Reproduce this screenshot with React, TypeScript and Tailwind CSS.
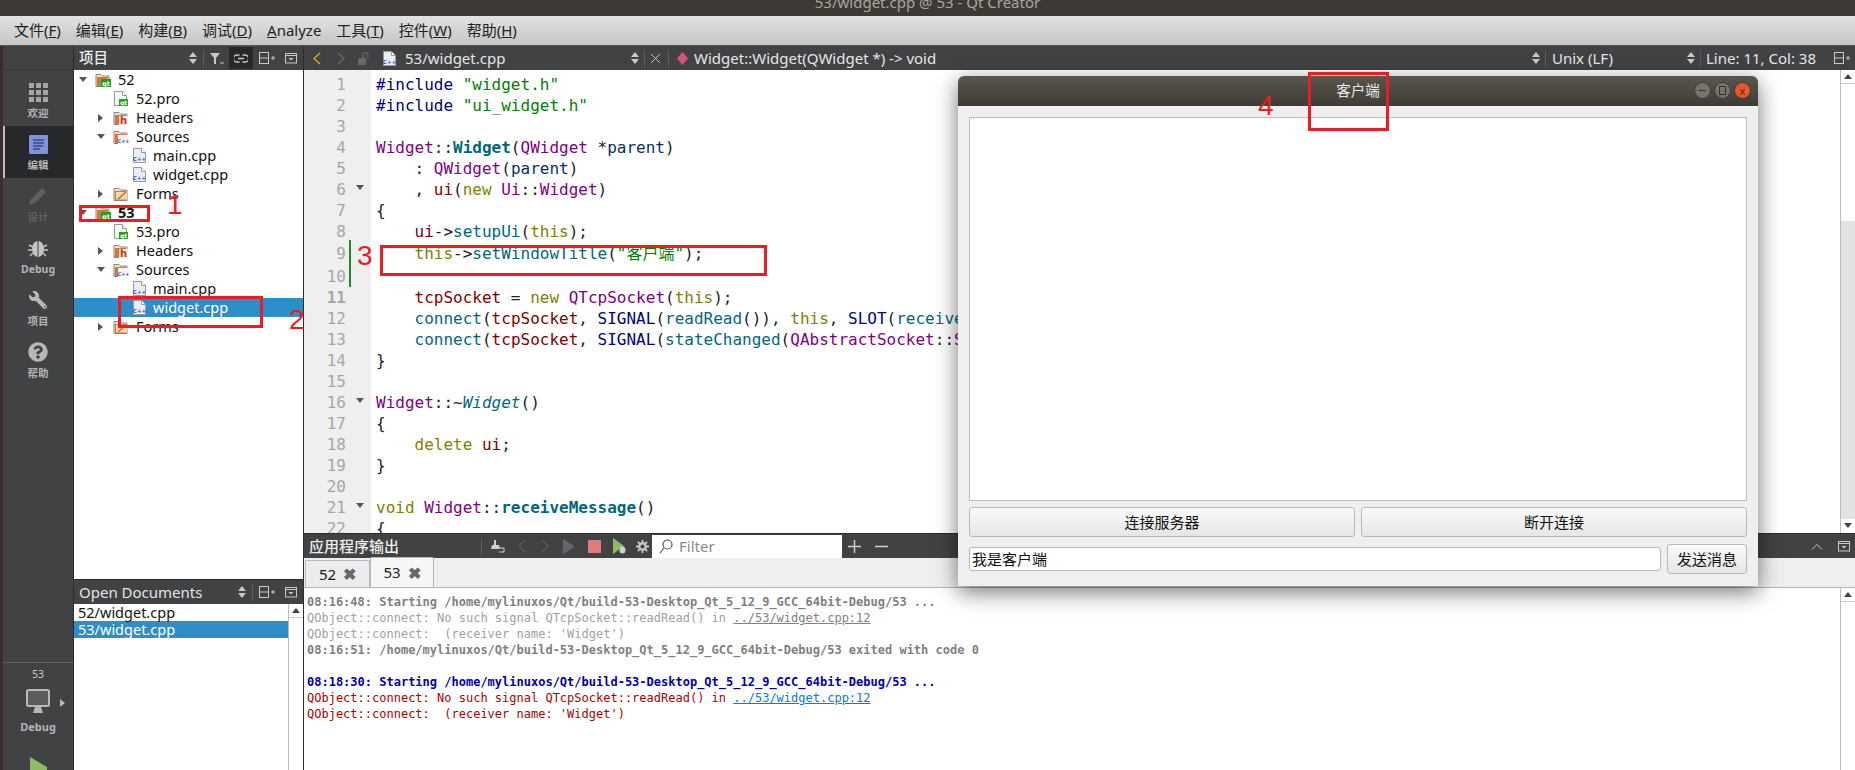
import { FaQuestionCircle, FaWrench } from "react-icons/fa";

const uiFont = "[font-family:'Noto_Sans','Noto_Sans_CJK_SC',sans-serif]";
const monoFont = "[font-family:'DejaVu_Sans_Mono','Noto_Sans_CJK_SC',monospace]";

const NAVY = "text-[#000080]";
const GREEN = "text-[#008000]";
const OLIVE = "text-[#808000]";
const PURPLE = "text-[#800080]";
const TEAL = "text-[#00677c]";
const MAROON = "text-[#800000]";
const DARK = "text-[#092e64]";
const BLACK = "text-[#222]";

type Token = [string, string, string?];

const codeLines: Token[][] = [
  [["#include", NAVY], [" \"widget.h\"", GREEN]],
  [["#include", NAVY], [" \"ui_widget.h\"", GREEN]],
  [],
  [["Widget", PURPLE], ["::", BLACK], ["Widget", TEAL, "font-bold"], ["(", BLACK], ["QWidget", PURPLE], [" *", BLACK], ["parent", DARK], [")", BLACK]],
  [["    : ", BLACK], ["QWidget", PURPLE], ["(", BLACK], ["parent", DARK], [")", BLACK]],
  [["    , ", BLACK], ["ui", MAROON], ["(", BLACK], ["new", OLIVE], [" ", BLACK], ["Ui", PURPLE], ["::", BLACK], ["Widget", PURPLE], [")", BLACK]],
  [["{", BLACK]],
  [["    ", BLACK], ["ui", MAROON], ["->", BLACK], ["setupUi", TEAL], ["(", BLACK], ["this", OLIVE], [");", BLACK]],
  [["    ", BLACK], ["this", OLIVE], ["->", BLACK], ["setWindowTitle", TEAL], ["(", BLACK], ["\"客户端\"", GREEN], [");", BLACK]],
  [],
  [["    ", BLACK], ["tcpSocket", MAROON], [" = ", BLACK], ["new", OLIVE], [" ", BLACK], ["QTcpSocket", PURPLE], ["(", BLACK], ["this", OLIVE], [");", BLACK]],
  [["    ", BLACK], ["connect", TEAL], ["(", BLACK], ["tcpSocket", MAROON], [", ", BLACK], ["SIGNAL", NAVY], ["(", BLACK], ["readRead", TEAL], ["()), ", BLACK], ["this", OLIVE], [", ", BLACK], ["SLOT", NAVY], ["(", BLACK], ["receiveMessage", TEAL], ["()));", BLACK]],
  [["    ", BLACK], ["connect", TEAL], ["(", BLACK], ["tcpSocket", MAROON], [", ", BLACK], ["SIGNAL", NAVY], ["(", BLACK], ["stateChanged", TEAL], ["(", BLACK], ["QAbstractSocket", PURPLE], ["::", BLACK], ["SocketState", PURPLE], [")));", BLACK]],
  [["}", BLACK]],
  [],
  [["Widget", PURPLE], ["::~", BLACK], ["Widget", TEAL, "italic"], ["()", BLACK]],
  [["{", BLACK]],
  [["    ", BLACK], ["delete", OLIVE], [" ", BLACK], ["ui", MAROON], [";", BLACK]],
  [["}", BLACK]],
  [],
  [["void", OLIVE], [" ", BLACK], ["Widget", PURPLE], ["::", BLACK], ["receiveMessage", TEAL, "font-bold"], ["()", BLACK]],
  [["{", BLACK]],
];

const foldLines = [6, 16, 21];

const Tri = ({ dir, className }: { dir: "up" | "down" | "right"; className?: string }) => {
  const pts = dir === "up" ? "0,6 8,6 4,1" : dir === "down" ? "0,1 8,1 4,6" : "1,0 1,8 6,4";
  return (
    <svg width="8" height="8" viewBox="0 0 8 8" className={className}>
      <polygon points={pts} fill="currentColor" />
    </svg>
  );
};

const UpDown = () => (
  <svg width="8" height="14" viewBox="0 0 8 14" className="text-[#c8c8c8]">
    <polygon points="0,6 8,6 4,1" fill="currentColor" />
    <polygon points="0,8 8,8 4,13" fill="currentColor" />
  </svg>
);

const Sep = () => <div className="w-px h-[17px] bg-[#5d5f61]" />;

const SplitIcon = () => (
  <svg width="16" height="14" viewBox="0 0 16 14" fill="none" stroke="#c8c8c8">
    <rect x="0.5" y="1.5" width="9" height="11" />
    <path d="M0.5 7h9M12 7h4M14 5v4" />
  </svg>
);

const CloseBox = () => (
  <svg width="12" height="12" viewBox="0 0 12 12" fill="none" stroke="#c8c8c8">
    <rect x="0.5" y="1.5" width="11" height="9.5" />
    <path d="M0.5 3.5h11" />
    <polygon points="3.5,6 8.5,6 6,8.5" fill="#c8c8c8" stroke="none" />
  </svg>
);

const FolderIcon = ({ badge }: { badge: "qt" | "h" | "c" | "form" }) => (
  <svg width="16" height="16" viewBox="0 0 16 16" className="shrink-0">
    <path d="M1 14.5V2.5h5l1.5 1.5H14v10.5z" fill="#f3e2d3" stroke="#8e8478" />
    <rect x="2" y="5" width="11" height="9" fill="#d9743a" />
    {badge === "qt" && (
      <>
        <rect x="6" y="7" width="10" height="8" fill="#21a01d" />
        <text x="11" y="13.5" textAnchor="middle" fontSize="6.5" fontWeight="700" fill="#fff" fontFamily="DejaVu Sans">qt</text>
      </>
    )}
    {badge === "h" && (
      <>
        <rect x="6" y="6" width="9" height="9" fill="#fbeee2" />
        <text x="10.5" y="14" textAnchor="middle" fontSize="10" fontWeight="700" fill="#c9301c" fontFamily="DejaVu Sans">h</text>
      </>
    )}
    {badge === "c" && (
      <>
        <rect x="5" y="6" width="11" height="9" fill="#f2f4fa" />
        <text x="10.5" y="13.5" textAnchor="middle" fontSize="5" fontWeight="700" fill="#3452b8" fontFamily="DejaVu Sans">C++</text>
      </>
    )}
    {badge === "form" && (
      <>
        <rect x="3" y="6" width="11" height="7.5" fill="#f4d9a8" />
        <path d="M5 13L13 6" stroke="#c8641e" strokeWidth="1.4" />
      </>
    )}
  </svg>
);

const FileIcon = ({ badge }: { badge: "qt" | "c" }) => (
  <svg width="15" height="17" viewBox="0 0 15 17" className="shrink-0">
    <path d="M1.5 1.5h8l4 4v10h-12z" fill={badge === "c" ? "#e9edf5" : "#f5f5f5"} stroke="#9a9a9a" />
    <path d="M9.5 1.5v4h4" fill="#fff" stroke="#9a9a9a" />
    {badge === "qt" ? (
      <>
        <rect x="6" y="9" width="9" height="7" fill="#21a01d" />
        <text x="10.5" y="15" textAnchor="middle" fontSize="6" fontWeight="700" fill="#fff" fontFamily="DejaVu Sans">qt</text>
      </>
    ) : (
      <text x="7.5" y="14" textAnchor="middle" fontSize="5.5" fontWeight="700" fill="#2f50c8" fontFamily="DejaVu Sans">C++</text>
    )}
  </svg>
);

type RowProps = {
  kind: "project" | "group" | "file" | "leaf";
  label: string;
  icon: React.ReactNode;
  open?: boolean;
  bold?: boolean;
  selected?: boolean;
};

const TreeRow = ({ kind, label, icon, open, bold, selected }: RowProps) => (
  <div
    className={`flex items-center h-[19px] text-[14.5px] ${selected ? "bg-[#2f8dc7] text-white" : "text-[#111]"} ${bold ? "font-bold" : ""} ${
      kind === "project" ? "" : kind === "leaf" ? "pl-[37px]" : "pl-[18px]"
    }`}
  >
    <div className="w-[18px] flex justify-center text-[#555]">
      {open !== undefined && <Tri dir={open ? "down" : "right"} />}
    </div>
    <div className={`ml-[3px] ${kind === "leaf" ? "mr-[5px]" : "mr-[7px]"} w-4 flex`}>{icon}</div>
    <span>{label}</span>
  </div>
);

const ProjectGroup = ({ name, bold, selected }: { name: string; bold?: boolean; selected?: boolean }) => (
  <>
    <TreeRow kind="project" label={name} open bold={bold} icon={<FolderIcon badge="qt" />} />
    <TreeRow kind="file" label={`${name}.pro`} icon={<FileIcon badge="qt" />} />
    <TreeRow kind="group" label="Headers" open={false} icon={<FolderIcon badge="h" />} />
    <TreeRow kind="group" label="Sources" open icon={<FolderIcon badge="c" />} />
    <TreeRow kind="leaf" label="main.cpp" icon={<FileIcon badge="c" />} />
    <TreeRow kind="leaf" label="widget.cpp" selected={selected} icon={<FileIcon badge="c" />} />
    <TreeRow kind="group" label="Forms" open={false} icon={<FolderIcon badge="form" />} />
  </>
);

const SideItem = ({ icon, label, active, dim }: { icon: React.ReactNode; label: string; active?: boolean; dim?: boolean }) => (
  <div
    className={`h-[52px] flex flex-col items-center justify-center gap-[3px] ${active ? "bg-[#272829] border-l-2 border-[#bdbdbd] pr-[2px]" : ""}`}
  >
    <div className="h-[24px] flex items-center justify-center">{icon}</div>
    <span className={`text-[10.5px] leading-[13px] font-bold ${dim ? "text-[#5f6163]" : "text-[#b4b4b4]"}`}>{label}</span>
  </div>
);

const Sidebar = () => (
  <div className={`w-[70px] shrink-0 bg-[#404244] flex flex-col ${uiFont}`}>
    <div className="h-[24px] border-b border-[#333] shrink-0" />
    <div className="pt-[4px] flex flex-col">
      <SideItem
        label="欢迎"
        icon={
          <div className="grid grid-cols-3 gap-[2px]">
            {Array.from({ length: 9 }).map((_, i) => (
              <div key={i} className="w-[5px] h-[5px] bg-[#a5a5a5]" />
            ))}
          </div>
        }
      />
      <SideItem
        label="编辑"
        active
        icon={
          <svg width="19" height="19" viewBox="0 0 19 19">
            <rect width="19" height="19" rx="1" fill="#7d93e2" />
            <path d="M4 5h11M4 8h11M4 11h10M4 14h7" stroke="#3f4a78" strokeWidth="1.6" />
          </svg>
        }
      />
      <SideItem
        label="设计"
        dim
        icon={
          <svg width="20" height="20" viewBox="0 0 20 20">
            <path d="M1 19l2-6L14 2l4 4L7 17z" fill="#5f6163" />
          </svg>
        }
      />
      <SideItem
        label="Debug"
        icon={
          <svg width="20" height="20" viewBox="0 0 20 20">
            <ellipse cx="10" cy="11" rx="6" ry="8" fill="#c4c4c4" />
            <path d="M10 3v16" stroke="#404244" />
            <path d="M1 7l4 2M19 7l-4 2M0 12h4M20 12h-4M2 18l3-3M18 18l-3-3" stroke="#c4c4c4" strokeWidth="1.4" />
          </svg>
        }
      />
      <SideItem label="项目" icon={<FaWrench size={18} className="text-[#b8b8b8] -scale-x-100" />} />
      <SideItem label="帮助" icon={<FaQuestionCircle size={20} className="text-[#b8b8b8]" />} />
    </div>
    <div className="mt-auto border-t border-[#5c5e60] flex flex-col items-center h-[108px] shrink-0">
      <span className="text-[10.5px] text-[#c8c8c8] mt-[4px] leading-[14px]">53</span>
      <div className="relative mt-[8px] h-[26px] flex justify-center">
        <svg width="24" height="25" viewBox="0 0 24 25">
          <rect x="1" y="1" width="22" height="16" rx="1.5" fill="#5c5d5e" stroke="#b8b8b8" strokeWidth="2" />
          <polygon points="9,18 15,18 17,24 7,24" fill="#b8b8b8" />
        </svg>
        <Tri dir="right" className="absolute left-[33px] top-[10px] text-[#bbb]" />
      </div>
      <span className="text-[11px] leading-[15px] font-bold text-[#b4b4b4] mt-[4px]">Debug</span>
      <svg width="18" height="13" viewBox="0 0 18 13" className="mt-[23px] shrink-0">
        <polygon points="1,0 18,10 18,13 1,13" fill="#8fbc63" />
      </svg>
    </div>
  </div>
);

const LeftPane = () => (
  <div className={`w-[230px] shrink-0 flex flex-col ${uiFont} border-l border-[#2c2c2c]`}>
    <div className="h-[24px] shrink-0 bg-[#404244] flex items-center text-[#eee] pl-[5px]">
      <span className="text-[14.5px] font-medium">项目</span>
      <div className="ml-auto flex items-center">
        <UpDown />
        <div className="ml-[6px]"><Sep /></div>
        <svg width="14" height="13" viewBox="0 0 14 13" className="ml-[6px]">
          <polygon points="0,1 10,1 6,6 6,12 4,12 4,6" fill="#c8c8c8" />
          <path d="M10 11h4" stroke="#c8c8c8" />
        </svg>
        <div className="w-[24px] h-[22px] bg-[#272829] flex items-center justify-center ml-[5px]">
          <svg width="14" height="9" viewBox="0 0 14 9" fill="none" stroke="#c8c8c8" strokeWidth="1.3">
            <path d="M5.5 1H3a3.4 3.4 0 000 7h2.5M8.5 1H11a3.4 3.4 0 010 7H8.5M4 4.5h6" />
          </svg>
        </div>
        <div className="ml-[6px] flex"><SplitIcon /></div>
        <div className="ml-[10px] mr-[6px] flex"><CloseBox /></div>
      </div>
    </div>
    <div className="h-[509px] shrink-0 bg-white">
      <ProjectGroup name="52" />
      <ProjectGroup name="53" bold selected />
    </div>
    <div className="h-[25px] shrink-0 bg-[#404244] border-t border-[#2c2c2c] flex items-center text-[#e4e4e4] pl-[5px]">
      <span className="text-[15px]">Open Documents</span>
      <div className="ml-auto flex items-center">
        <UpDown />
        <div className="ml-[6px]"><Sep /></div>
        <div className="ml-[6px] flex"><SplitIcon /></div>
        <div className="ml-[10px] mr-[6px] flex"><CloseBox /></div>
      </div>
    </div>
    <div className="flex-1 flex bg-white">
      <div className="flex-1 text-[14.5px] text-[#111]">
        <div className="h-[17px] flex items-center pl-[4px]">52/widget.cpp</div>
        <div className="h-[17px] flex items-center pl-[4px] bg-[#2f8dc7] text-white">53/widget.cpp</div>
      </div>
      <ScrollColumn />
    </div>
  </div>
);

const ScrollColumn = ({ thumb }: { thumb?: boolean }) => (
  <div className="w-[15px] shrink-0 border-l border-[#bcbcbc] bg-white flex flex-col">
    <div className="h-[14px] border-b border-[#c8c8c8] flex items-center justify-center text-[#444] shrink-0">
      <Tri dir="up" />
    </div>
    <div className="flex-1 flex flex-col">
      {thumb && <div className="mt-[137px] flex-1 bg-[#e2e2e2]" />}
    </div>
    {thumb && (
      <div className="h-[14px] flex items-center justify-center text-[#444] shrink-0">
        <Tri dir="down" />
      </div>
    )}
  </div>
);

const EditorHeader = () => (
  <div className={`h-[24px] shrink-0 bg-[#404244] flex items-center text-[#e6e6e6] text-[15px] ${uiFont}`}>
    <svg width="8" height="13" viewBox="0 0 8 13" fill="none" stroke="#e0a91c" strokeWidth="1.3" className="ml-[9px]">
      <path d="M7 1L1 6.5 7 12" />
    </svg>
    <svg width="8" height="13" viewBox="0 0 8 13" fill="none" stroke="#65676a" strokeWidth="1.3" className="ml-[16px]">
      <path d="M1 1l6 5.5L1 12" />
    </svg>
    <svg width="13" height="13" viewBox="0 0 13 13" className="ml-[13px]">
      <rect x="0" y="6" width="8" height="7" fill="#65676a" />
      <path d="M5 6V3a2.5 2.5 0 015 0v3" stroke="#65676a" strokeWidth="1.4" fill="none" />
    </svg>
    <div className="ml-[11px] flex"><FileIcon badge="c" /></div>
    <span className="ml-[8px] w-[226px]">53/widget.cpp</span>
    <UpDown />
    <div className="ml-[5px]"><Sep /></div>
    <svg width="11" height="11" viewBox="0 0 11 11" stroke="#c8c8c8" className="ml-[5px]">
      <path d="M1 1l9 9M10 1l-9 9" />
    </svg>
    <div className="ml-[7px]"><Sep /></div>
    <svg width="11" height="13" viewBox="0 0 11 13" className="ml-[8px]">
      <polygon points="5.5,0 11,6.5 5.5,13 0,6.5" fill="#df4f7d" />
    </svg>
    <span className="ml-[6px]">Widget::Widget(QWidget *) -&gt; void</span>
    <div className="ml-auto flex items-center">
      <UpDown />
      <div className="ml-[5px]"><Sep /></div>
      <span className="ml-[6px] w-[135px]">Unix (LF)</span>
      <UpDown />
      <div className="ml-[5px]"><Sep /></div>
      <span className="ml-[5px] w-[128px]">Line: 11, Col: 38</span>
      <div className="mr-[5px] flex"><SplitIcon /></div>
    </div>
  </div>
);

const Editor = () => (
  <div className={`h-[463px] shrink-0 flex overflow-hidden bg-white text-[16px] ${monoFont}`}>
    <div className="w-[67px] shrink-0 bg-[#efefef] pt-[4px] relative">
      <div className="absolute left-[45px] top-[170px] w-[2px] h-[47px] bg-[#1f8a2a]" />
      {codeLines.map((_, i) => (
        <div
          key={i}
          className={`relative pr-[25px] text-right text-[#a6a6a6] ${i === 8 ? "h-[24px] leading-[24px]" : "h-[21px] leading-[21px]"} ${i === 10 ? "font-bold text-[#777]" : ""}`}
        >
          {i + 1}
          {foldLines.includes(i + 1) && (
            <Tri dir="down" className="absolute right-[7px] top-[5px] text-[#555]" />
          )}
        </div>
      ))}
    </div>
    <div className="flex-1 min-w-0 pt-[4px] pl-[5px] whitespace-pre">
      {codeLines.map((line, i) => (
        <div key={i} className={i === 8 ? "h-[24px] leading-[24px]" : "h-[21px] leading-[21px]"}>
          {line.map(([text, color, extra], j) => (
            <span key={j} className={`${color} ${extra ?? ""}`}>{text}</span>
          ))}
        </div>
      ))}
    </div>
    <ScrollColumn thumb />
  </div>
);

const OutputHeader = () => (
  <div className={`h-[25px] shrink-0 bg-[#404244] border-t border-[#2c2c2c] flex items-center ${uiFont}`}>
    <span className="ml-[5px] w-[172px] text-[15px] text-[#eee] font-medium">应用程序输出</span>
    <Sep />
    <svg width="14" height="14" viewBox="0 0 14 14" className="ml-[9px]">
      <path d="M3 1h2v5h3l1 4H0l1-4h2z" fill="#d0d0d0" />
      <path d="M8 9h5v4H8" stroke="#d0d0d0" fill="none" />
    </svg>
    <svg width="8" height="14" viewBox="0 0 8 14" fill="none" stroke="#65676a" className="ml-[13px]">
      <path d="M7 1L1 7l6 6" />
    </svg>
    <svg width="8" height="14" viewBox="0 0 8 14" fill="none" stroke="#65676a" className="ml-[15px]">
      <path d="M1 1l6 6-6 6" />
    </svg>
    <svg width="12" height="15" viewBox="0 0 12 15" className="ml-[14px]">
      <polygon points="0,0 12,7.5 0,15" fill="#65676a" />
    </svg>
    <div className="ml-[13px] w-[13px] h-[13px] bg-[#e07b7b]" />
    <svg width="14" height="16" viewBox="0 0 14 16" className="ml-[12px]">
      <polygon points="0,0 11,8 0,16" fill="#8fbc63" />
      <ellipse cx="9.5" cy="12" rx="3" ry="3.5" fill="#d0d0d0" />
    </svg>
    <svg width="13" height="13" viewBox="0 0 14 14" className="ml-[9px]">
      <circle cx="7" cy="7" r="3.5" fill="none" stroke="#c8c8c8" strokeWidth="2.5" />
      <path d="M7 0v3M7 11v3M0 7h3M11 7h3M2 2l2 2M10 10l2 2M12 2l-2 2M4 10l-2 2" stroke="#c8c8c8" strokeWidth="2" />
    </svg>
    <div className="ml-[3px] w-[190px] h-[23px] bg-white flex items-center pl-[7px]">
      <svg width="14" height="15" viewBox="0 0 14 15" fill="none" stroke="#555" strokeWidth="1.2">
        <circle cx="8.5" cy="5.5" r="4.5" />
        <path d="M5 9l-4 5" />
      </svg>
      <span className="ml-[6px] text-[15px] text-[#888]">Filter</span>
    </div>
    <svg width="13" height="13" viewBox="0 0 13 13" stroke="#d0d0d0" strokeWidth="1.5" className="ml-[6px]">
      <path d="M0 6.5h13M6.5 0v13" />
    </svg>
    <svg width="13" height="13" viewBox="0 0 13 13" stroke="#d0d0d0" strokeWidth="1.5" className="ml-[14px]">
      <path d="M0 6.5h13" />
    </svg>
    <div className="ml-auto flex items-center mr-[5px]">
      <svg width="12" height="7" viewBox="0 0 12 7" fill="none" stroke="#c8c8c8" className="mr-[15px]">
        <path d="M1 6.5l5-5 5 5" />
      </svg>
      <CloseBox />
    </div>
  </div>
);

const OutputTabs = () => (
  <div className={`h-[30px] shrink-0 bg-[#efefef] border-b border-[#b5b5b5] flex items-end text-[15px] text-[#222] ${uiFont}`}>
    <div className="w-[65px] h-[27px] ml-[1px] border border-b-0 border-[#b8b8b8] rounded-t-[2px] bg-[#ececec] flex items-center justify-center gap-[7px]">
      <span>52</span>
      <span className="text-[#666] text-[16px] font-bold">✖</span>
    </div>
    <div className="w-[64px] h-[30px] border border-b-0 border-[#b8b8b8] rounded-t-[2px] bg-[#f6f6f6] flex items-center justify-center gap-[7px]">
      <span>53</span>
      <span className="text-[#666] text-[16px] font-bold">✖</span>
    </div>
  </div>
);

const OutputLine = ({ className, children }: { className: string; children?: React.ReactNode }) => (
  <div className={`h-[16px] leading-[16px] whitespace-pre ${className}`}>{children}</div>
);

const Output = () => (
  <div className="flex-1 min-h-0 flex bg-white">
    <div className={`flex-1 min-w-0 pt-[6px] pl-[3px] text-[12px] overflow-hidden ${monoFont}`}>
      <OutputLine className="font-bold text-[#808080]">08:16:48: Starting /home/mylinuxos/Qt/build-53-Desktop_Qt_5_12_9_GCC_64bit-Debug/53 ...</OutputLine>
      <OutputLine className="text-[#a0a0a0]">
        QObject::connect: No such signal QTcpSocket::readRead() in <u className="text-[#808080]">../53/widget.cpp:12</u>
      </OutputLine>
      <OutputLine className="text-[#a0a0a0]">QObject::connect:  (receiver name: 'Widget')</OutputLine>
      <OutputLine className="font-bold text-[#808080]">08:16:51: /home/mylinuxos/Qt/build-53-Desktop_Qt_5_12_9_GCC_64bit-Debug/53 exited with code 0</OutputLine>
      <OutputLine className="" />
      <OutputLine className="font-bold text-[#0000aa]">08:18:30: Starting /home/mylinuxos/Qt/build-53-Desktop_Qt_5_12_9_GCC_64bit-Debug/53 ...</OutputLine>
      <OutputLine className="text-[#aa0000]">
        QObject::connect: No such signal QTcpSocket::readRead() in <u className="text-[#007af4]">../53/widget.cpp:12</u>
      </OutputLine>
      <OutputLine className="text-[#aa0000]">QObject::connect:  (receiver name: 'Widget')</OutputLine>
    </div>
    <ScrollColumn />
  </div>
);

const WinButton = ({ close, children }: { close?: boolean; children: React.ReactNode }) => (
  <div
    className={`w-[17px] h-[17px] rounded-full flex items-center justify-center text-[11px] leading-none border border-[#3a3834] ${
      close ? "bg-[#e4582b] text-[#5c2410]" : "bg-[#75736d] text-[#35332f]"
    }`}
  >
    {children}
  </div>
);

const QtButton = ({ label, className }: { label: string; className: string }) => (
  <div
    className={`h-[30px] border border-[#b8b8b8] rounded-[3px] bg-gradient-to-b from-[#fafafa] to-[#e6e6e6] flex items-center justify-center text-[15px] text-[#111] ${className}`}
  >
    {label}
  </div>
);

const ClientWindow = () => (
  <div className={`absolute left-[958px] top-[76px] z-10 w-[800px] h-[510px] rounded-t-[6px] flex flex-col shadow-[0_6px_22px_rgba(0,0,0,0.55)] ${uiFont}`}>
    <div className="h-[30px] shrink-0 rounded-t-[6px] bg-gradient-to-b from-[#5a564d] to-[#3f3c37] relative flex items-center justify-center">
      <span className="text-[14.5px] text-[#e8e8e8]">客户端</span>
      <div className="absolute right-[7px] top-[6px] flex gap-[3px]">
        <WinButton>
          <svg width="9" height="9" viewBox="0 0 9 9" stroke="#35332f">
            <path d="M1 4.5h7" />
          </svg>
        </WinButton>
        <WinButton>
          <svg width="9" height="9" viewBox="0 0 9 9" fill="none" stroke="#35332f">
            <rect x="1.5" y="0.5" width="6" height="8" />
          </svg>
        </WinButton>
        <WinButton close>x</WinButton>
      </div>
    </div>
    <div className="flex-1 min-h-0 bg-[#efefef] flex flex-col px-[11px] pt-[11px] pb-[12px]">
      <div className="flex-1 min-h-0 bg-white border border-[#bcbcbc]" />
      <div className="mt-[6px] flex gap-[6px] shrink-0">
        <QtButton label="连接服务器" className="flex-1" />
        <QtButton label="断开连接" className="flex-1" />
      </div>
      <div className="mt-[7px] flex items-center gap-[6px] shrink-0">
        <div className="flex-1 h-[24px] bg-white border border-[#b8b8b8] rounded-[3px] flex items-center pl-[2px] text-[15px] text-[#111]">
          我是客户端
        </div>
        <QtButton label="发送消息" className="w-[80px]" />
      </div>
    </div>
  </div>
);

// the red boxes and numbers somebody drew on top of the screenshot
const Annotations = () => (
  <div className="[font-family:'Liberation_Sans',sans-serif] text-[#ed1c24] text-[28px] leading-none">
    <div className="absolute z-20 left-[79px] top-[205px] w-[71px] h-[17px] border-[3px] border-[#ed1c24]" />
    <span className="absolute z-20 left-[167px] top-[191px]">1</span>
    <div className="absolute z-20 left-[118px] top-[296px] w-[145px] h-[32px] border-[3px] border-[#ed1c24]" />
    <span className="absolute z-20 left-[289px] top-[306px]">2</span>
    <div className="absolute z-20 left-[380px] top-[245px] w-[387px] h-[31px] border-[3px] border-[#ed1c24]" />
    <span className="absolute z-20 left-[357px] top-[242px]">3</span>
    <div className="absolute z-20 left-[1308px] top-[72px] w-[81px] h-[59px] border-[3px] border-[#ed1c24]" />
    <span className="absolute z-20 left-[1258px] top-[92px]">4</span>
  </div>
);

const menus: [string, string][] = [
  ["文件", "F"],
  ["编辑", "E"],
  ["构建", "B"],
  ["调试", "D"],
];

const MenuBar = () => (
  <div className={`h-[30px] shrink-0 bg-gradient-to-b from-[#e2e2e2] to-[#c6c6c6] border-b border-[#555] flex items-center pl-[14px] gap-[15px] text-[15px] text-[#222] ${uiFont}`}>
    {menus.map(([name, key]) => (
      <span key={name}>
        {name}(<u>{key}</u>)
      </span>
    ))}
    <span><u>A</u>nalyze</span>
    <span>工具(<u>T</u>)</span>
    <span>控件(<u>W</u>)</span>
    <span>帮助(<u>H</u>)</span>
  </div>
);

const App = () => {
  return (
    <div className="relative w-[1855px] h-[770px] overflow-hidden flex flex-col bg-[#404244]">
      <div className={`h-4 shrink-0 bg-[#3d3a36] overflow-hidden flex justify-center ${uiFont}`}>
        <span className="text-[15px] leading-[15px] -mt-[5px] text-[#a8a6a0]">53/widget.cpp @ 53 - Qt Creator</span>
      </div>
      <MenuBar />
      <div className="flex-1 min-h-0 flex">
        <div className="w-[3px] shrink-0 bg-[#3d2a35]" />
        <Sidebar />
        <LeftPane />
        <div className="flex-1 min-w-0 flex flex-col border-l border-[#2c2c2c]">
          <EditorHeader />
          <Editor />
          <OutputHeader />
          <OutputTabs />
          <Output />
        </div>
      </div>
      <ClientWindow />
      <Annotations />
    </div>
  );
};

export default App;
